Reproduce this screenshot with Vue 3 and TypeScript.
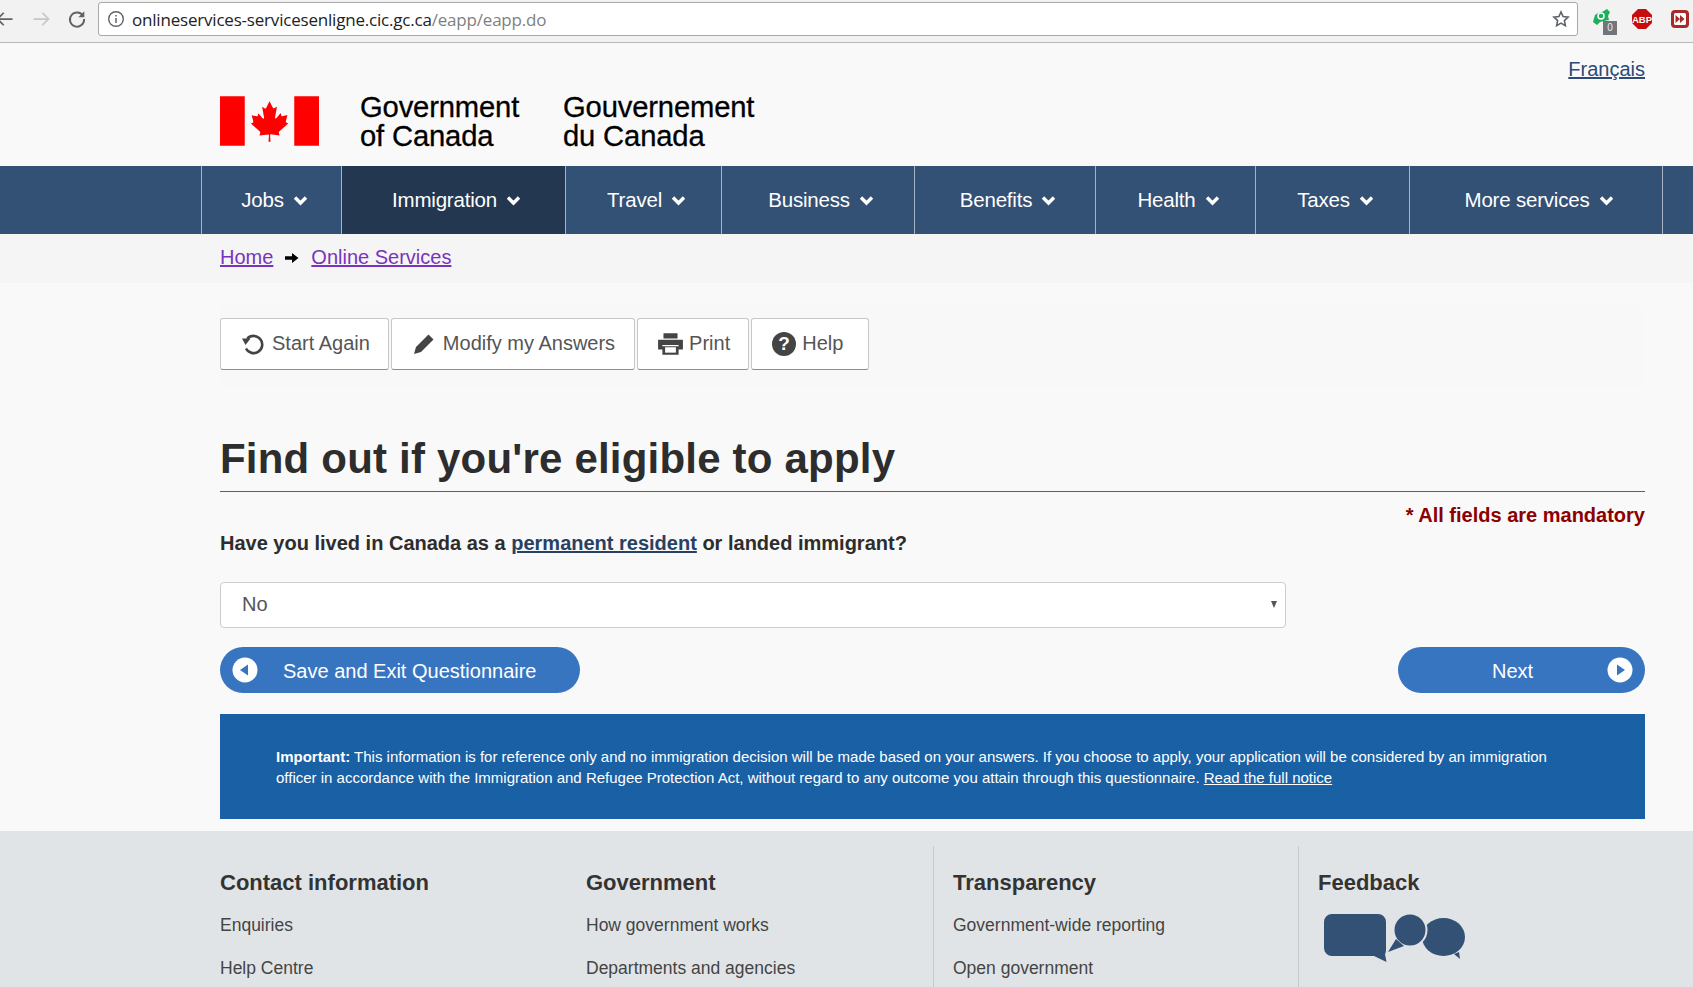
<script setup lang="ts">
const nav = [
  { label: 'Jobs', width: 140, active: false },
  { label: 'Immigration', width: 224, active: true },
  { label: 'Travel', width: 156, active: false },
  { label: 'Business', width: 193, active: false },
  { label: 'Benefits', width: 181, active: false },
  { label: 'Health', width: 160, active: false },
  { label: 'Taxes', width: 154, active: false },
  { label: 'More services', width: 254, active: false },
]
const footer = [
  { title: 'Contact information', links: ['Enquiries', 'Help Centre'] },
  { title: 'Government', links: ['How government works', 'Departments and agencies'] },
  { title: 'Transparency', links: ['Government-wide reporting', 'Open government'] },
]
</script>

<template>
  <div class="page">
    <div class="chrome">
      <div class="chrome-nav">
        <svg width="20" height="20" viewBox="0 0 16 16" class="back"><path d="M14 8H2M7 3 2 8l5 5" fill="none" stroke="#5f6368" stroke-width="1.4"/></svg>
        <svg width="20" height="20" viewBox="0 0 16 16"><path d="M2 8h12M9 3l5 5-5 5" fill="none" stroke="#c4c6c8" stroke-width="1.4"/></svg>
        <svg width="20" height="20" viewBox="0 0 18 18"><path d="M14.5 6.2A6.400 6.400 0 1 0 15.400 9" fill="none" stroke="#5f6368" stroke-width="1.700"/><path d="M15.600 2v5.400h-5.400z" fill="#5f6368"/></svg>
      </div>
      <div class="omnibox">
        <svg width="18" height="18" viewBox="0 0 18 18"><circle cx="9" cy="9" r="7.300" fill="none" stroke="#5f6368" stroke-width="1.400"/><path d="M9 8v5M9 5v1.600" stroke="#5f6368" stroke-width="1.500"/></svg>
        <span class="url">onlineservices-servicesenligne.cic.gc.ca<span class="url-path">/eapp/eapp.do</span></span>
        <svg class="star" width="18" height="18" viewBox="0 0 18 18"><path d="M9 2l2.100 4.600 5 .6-3.700 3.400 1 5L9 13.100 4.600 15.600l1-5L1.900 7.200l5-.6z" fill="none" stroke="#5f6368" stroke-width="1.600"/></svg>
      </div>
      <div class="extensions">
        <div class="ext-green">
          <svg width="22" height="20" viewBox="0 0 22 20"><path d="M3 15 5 8l3-2 4-1 5-3 3 3-2 4 1 4-5 1-4 1-3 3z" fill="#1fae5b"/><circle cx="11" cy="9" r="3" fill="none" stroke="#fff" stroke-width="1.500"/></svg>
          <span class="ext-badge">0</span>
        </div>
        <svg width="22" height="22" viewBox="0 0 22 22"><path d="M7 1h8l6 6v8l-6 6H7l-6-6V7z" fill="#c70d0d"/><text x="11" y="14.500" text-anchor="middle" class="abp">ABP</text></svg>
        <svg class="ext-ff" width="20" height="20" viewBox="0 0 20 20"><rect x="1" y="1" width="18" height="18" rx="4" fill="#a82a2a"/><rect x="4" y="4" width="12" height="12" rx="1.500" fill="#fff"/><path d="M5.500 6l4.500 4-4.500 4zM10 6l4.500 4-4.500 4z" fill="#a82a2a"/></svg>
      </div>
    </div>

    <header class="site-header">
      <a class="lang" href="#">Français</a>
      <div class="brand">
        <svg class="flag" width="99" height="50" viewBox="0 0 100 50">
          <rect width="25" height="50" fill="#f00"/>
          <rect x="75" width="25" height="50" fill="#f00"/>
          <g transform="translate(50 5) scale(.8 .87) translate(-50 -3)">
            <path d="M50 3l-4.200 7.800c-.5.8-1.300.7-2.100.3l-3-1.600 2.300 11.900c.5 2.200-1 2.200-1.800 1.300l-5.200-5.800-.8 3c-.1.400-.5.800-1.100.7l-6.600-1.400 1.700 6.300c.4 1.400.7 2-.4 2.400l-2.300 1.100 11.300 9.200c.4.400.7 1 .5 1.500l-1 3.200 11.200-1.300c.4 0 .9.300.9.800L48.700 50h2.600L50.700 42.300c0-.5.500-.8.900-.8l11.200 1.300-1-3.200c-.2-.5.100-1.100.5-1.500l11.300-9.200-2.300-1.100c-1.100-.4-.8-1-.4-2.400l1.700-6.300-6.600 1.400c-.6.100-1-.3-1.100-.7l-.8-3-5.200 5.800c-.8.900-2.300.9-1.800-1.300l2.300-11.900-3 1.600c-.8.400-1.600.5-2.100-.3z" fill="#f00"/>
          </g>
        </svg>
        <div class="wordmark">Government<br />of Canada</div>
        <div class="wordmark">Gouvernement<br />du Canada</div>
      </div>
    </header>

    <nav class="main-nav">
      <a v-for="item in nav" :key="item.label" href="#" class="nav-item" :class="{ active: item.active }" :style="{ width: item.width + 'px' }">
        {{ item.label }}
        <svg width="15" height="11" viewBox="0 0 15 11"><path d="M2 2.500 7.500 8l5.500-5.500" fill="none" stroke="#fff" stroke-width="3.400"/></svg>
      </a>
    </nav>

    <div class="crumbs">
      <a href="#">Home</a>
      <svg width="14" height="12" viewBox="0 0 14 12"><path d="M0 4.200h7V1l6.500 5L7 11V7.800H0z" fill="#000"/></svg>
      <a href="#">Online Services</a>
    </div>

    <main class="content">
      <div class="toolbar">
        <button class="tool">
          <svg width="24" height="24" viewBox="0 0 24 24"><path d="M6.200 6.800A8.600 8.600 0 1 1 5 16.500" fill="none" stroke="#444" stroke-width="2.600"/><path d="M1 6.500h8.500L4.500 13z" fill="#444"/></svg>
          <span>Start Again</span>
        </button>
        <button class="tool">
          <svg width="22" height="22" viewBox="0 0 22 22"><path d="M15.500 1.500l5 5L8 19 1 21l2-7z" fill="#444"/></svg>
          <span>Modify my Answers</span>
        </button>
        <button class="tool">
          <svg width="27" height="26" viewBox="0 0 25 24"><path d="M6 2h13v5H6zM1 8h23v9h-4v-4H5v4H1zM5 14h15v8H5z" fill="#444"/><rect x="7.500" y="15" width="10" height="5" fill="#fff"/></svg>
          <span>Print</span>
        </button>
        <button class="tool">
          <svg width="24" height="24" viewBox="0 0 24 24"><circle cx="12" cy="12" r="12" fill="#444"/><text x="12" y="18" text-anchor="middle" class="q">?</text></svg>
          <span>Help</span>
        </button>
      </div>

      <h1>Find out if you're eligible to apply</h1>
      <p class="mandatory">* All fields are mandatory</p>
      <p class="question">Have you lived in Canada as a <a href="#">permanent resident</a> or landed immigrant?</p>

      <div class="select">
        <span>No</span>
        <i class="caret"></i>
      </div>

      <div class="actions">
        <a href="#" class="pill save">
          <svg width="26" height="26" viewBox="0 0 26 26"><circle cx="13" cy="13" r="12.500" fill="#fff"/><path d="M8 13l8-5.500v11z" fill="#3875c1"/></svg>
          <span>Save and Exit Questionnaire</span>
        </a>
        <a href="#" class="pill next">
          <span>Next</span>
          <svg width="26" height="26" viewBox="0 0 26 26"><circle cx="13" cy="13" r="12.500" fill="#fff"/><path d="M18 13l-8-5.500v11z" fill="#3875c1"/></svg>
        </a>
      </div>

      <div class="notice">
        <b>Important:</b> This information is for reference only and no immigration decision will be made based on your answers. If you choose to apply, your application will be considered by an immigration officer in accordance with the Immigration and Refugee Protection Act, without regard to any outcome you attain through this questionnaire. <a href="#">Read the full notice</a>
      </div>
    </main>

    <footer class="footer">
      <div class="footer-inner">
        <section v-for="(col, i) in footer" :key="col.title" class="col" :class="'col' + i">
          <h2>{{ col.title }}</h2>
          <a v-for="l in col.links" :key="l" href="#">{{ l }}</a>
        </section>
        <section class="col col3">
          <h2>Feedback</h2>
          <svg width="146" height="50" viewBox="0 0 146 50">
            <path d="M8 0h46a8 8 0 0 1 8 8v26c0 2 0 5-1 6l1.500 8L50 42H8a8 8 0 0 1-8-8V8a8 8 0 0 1 8-8z" fill="#335075"/>
            <ellipse cx="119.500" cy="23" rx="21.500" ry="19" fill="#335075"/>
            <path d="M130 40l6 5-1-7z" fill="#335075"/>
            <circle cx="86" cy="16" r="16.500" fill="#335075" stroke="#e1e4e7" stroke-width="2"/>
            <path d="M72 25l-8 13 16-6z" fill="#335075"/>
          </svg>
        </section>
      </div>
    </footer>
  </div>
</template>

<style>
html, body { margin: 0; background: #f9f9f9; }
html { overflow: hidden; }
</style>

<style scoped>
.page {
  width: 1693px;
  height: 987px;
  overflow: hidden;
  font-family: "Liberation Sans", Arial, sans-serif;
  color: #333;
  background: #f9f9f9;
}
.chrome {
  height: 42px;
  display: flex;
  align-items: flex-start;
  background: #f2f2f2;
  border-bottom: 1px solid #b8b8b8;
}
.chrome-nav {
  width: 98px;
  height: 38px;
  display: flex;
  align-items: center;
  gap: 16px;
  box-sizing: border-box;
  flex: none;
}
.back { margin-left: -5px; }
.omnibox {
  width: 1480px;
  height: 34px;
  margin-top: 2px;
  flex: none;
  display: flex;
  align-items: center;
  gap: 7px;
  padding: 0 7px 0 8px;
  box-sizing: border-box;
  background: #fff;
  border: 1px solid #a9a9a9;
  border-radius: 3px;
}
.url {
  font-family: "Open Sans", "Liberation Sans", sans-serif;
  font-size: 17px;
  letter-spacing: -0.2px;
  color: #222;
}
.url-path { color: #7f7f7f; }
.star { margin-left: auto; }
.extensions {
  flex: 1;
  display: flex;
  align-items: center;
  height: 38px;
  gap: 17px;
  padding-left: 12px;
}
.ext-green { position: relative; width: 24px; height: 24px; }
.ext-badge {
  position: absolute;
  left: 13px;
  top: 14px;
  width: 14px;
  height: 14px;
  background: #6f757b;
  color: #eee;
  font-size: 10px;
  line-height: 14px;
  text-align: center;
}
.abp { font-size: 9.500px; font-weight: 700; fill: #fff; font-family: "Liberation Sans", sans-serif; }
.ext-ff { flex: none; }

.site-header {
  position: relative;
  height: 123px;
  box-sizing: border-box;
  padding: 53px 0 0 220px;
}
.lang {
  position: absolute;
  right: 48px;
  top: 15px;
  font-size: 20px;
  color: #2e4a78;
}
.brand { display: flex; align-items: flex-start; }
.flag { flex: none; }
.wordmark {
  font-family: "Liberation Sans", sans-serif;
  font-size: 29.200px;
  line-height: 29px;
  color: #000;
  letter-spacing: -0.15px;
  margin-top: -3px;
  -webkit-text-stroke: 0.3px #000;
}
.wordmark:nth-of-type(1) { margin-left: 41px; width: 203px; }

.main-nav {
  height: 68px;
  display: flex;
  padding-left: 201px;
  background: #335075;
}
.nav-item {
  flex: none;
  box-sizing: border-box;
  display: flex;
  align-items: center;
  justify-content: center;
  gap: 9px;
  border-left: 1px solid #a5b3c5;
  color: #fff;
  font-size: 20.500px;
  letter-spacing: -0.2px;
  text-decoration: none;
  padding-left: 6px;
}
.nav-item:last-child { border-right: 1px solid #a5b3c5; }
.nav-item.active { background: #233850; }

.crumbs {
  height: 49px;
  display: flex;
  align-items: center;
  gap: 12px;
  padding: 0 0 2px 220px;
  background: #f5f5f5;
  font-size: 20px;
  box-sizing: border-box;
}
.crumbs a { color: #7834bc; }

.content {
  padding: 23px 48px 0 220px;
  height: 548px;
  box-sizing: border-box;
}
.toolbar {
  display: flex;
  gap: 2px;
  padding: 12px 0 18px;
  background: #f8f8f8;
  height: 82px;
  box-sizing: border-box;
}
.tool {
  height: 52px;
  display: flex;
  align-items: center;
  font-family: "Liberation Sans", sans-serif;
  font-size: 20px;
  color: #555;
  background: #fff;
  border: 1px solid #c8c8c8;
  border-bottom-color: #8d8d8d;
  border-radius: 3px;
}
.tool span { padding-bottom: 2px; }
.tool:nth-child(1) { padding: 0 18px 0 20px; gap: 7px; }
.tool:nth-child(2) { padding: 0 19px 0 21px; gap: 8px; }
.tool:nth-child(3) { padding: 0 18px 0 19px; gap: 5px; }
.tool:nth-child(4) { padding: 0 25px 0 20px; gap: 6px; }
.q { font-size: 19px; font-weight: 700; fill: #fff; font-family: "Liberation Sans", sans-serif; }

h1 {
  margin: 49px 0 0;
  height: 54px;
  font-size: 42px;
  line-height: 44px;
  font-weight: 700;
  color: #2d2d2d;
  border-bottom: 1px solid #af3c43;
  letter-spacing: 0.2px;
}
.mandatory {
  margin: 11px 0 0;
  text-align: right;
  font-size: 20px;
  line-height: 24px;
  font-weight: 700;
  color: #8b0000;
}
.question {
  margin: 3px 0 0;
  font-size: 20px;
  line-height: 26px;
  font-weight: 700;
  color: #2d2d2d;
}
.question a { color: #284162; }
.select {
  width: 1066px;
  height: 46px;
  margin-top: 26px;
  display: flex;
  align-items: center;
  justify-content: space-between;
  padding: 0 8px 2px 21px;
  box-sizing: border-box;
  background: #fff;
  border: 1px solid #ccc;
  border-radius: 4px;
  font-size: 20px;
  color: #555;
}
.caret {
  width: 0;
  height: 0;
  border-left: 3.500px solid transparent;
  border-right: 3.500px solid transparent;
  border-top: 7px solid #555;
}
.actions {
  display: flex;
  justify-content: space-between;
  margin-top: 19px;
}
.pill {
  height: 46px;
  border-radius: 23px;
  background: #3875c1;
  color: #fff;
  display: flex;
  align-items: center;
  font-size: 20px;
  text-decoration: none;
  box-sizing: border-box;
}
.pill span { padding-top: 2px; }
.pill.save {
  width: 360px;
  padding-left: 12px;
  gap: 25px;
}
.pill.next {
  width: 247px;
  padding-right: 12px;
  justify-content: space-between;
  padding-left: 94px;
}
.notice {
  margin-top: 21px;
  height: 105px;
  box-sizing: border-box;
  padding: 32px 70px 0 56px;
  background: #1a60a5;
  color: #fff;
  font-size: 15px;
  line-height: 21px;
}
.notice a { color: #fff; }

.footer {
  height: 156px;
  background: #e1e4e7;
  padding-top: 15px;
  box-sizing: border-box;
}
.footer-inner {
  display: flex;
  padding-left: 220px;
  height: 141px;
}
.col { box-sizing: border-box; }
.col0 { width: 366px; }
.col1 { width: 347px; }
.col2 { width: 365px; border-left: 1px solid #c5c8cc; padding-left: 19px; }
.col3 { border-left: 1px solid #c5c8cc; padding-left: 19px; }
.col h2 {
  margin: 23px 0 0;
  font-size: 22px;
  line-height: 28px;
  color: #333;
}
.col a {
  display: block;
  margin-top: 15px;
  font-size: 17.500px;
  line-height: 28px;
  color: #444;
  text-decoration: none;
}
.col h2 + a { margin-top: 14px; }
.col3 svg { display: block; margin: 17px 0 0 6px; }
</style>
